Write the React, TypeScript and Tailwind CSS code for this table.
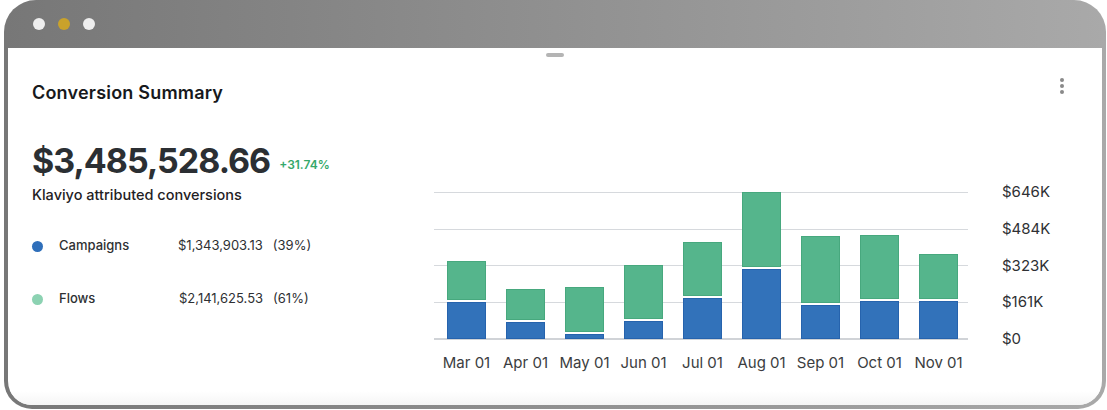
import React from "react"

const FONT = { fontFamily: "Inter, 'Noto Sans', sans-serif" }

interface Month {
  label: string
  campaigns: number
  flows: number
}

// values in $K, read off the chart
const months: Month[] = [
  { label: "Mar 01", campaigns: 162, flows: 183 },
  { label: "Apr 01", campaigns: 76, flows: 146 },
  { label: "May 01", campaigns: 21, flows: 207 },
  { label: "Jun 01", campaigns: 79, flows: 247 },
  { label: "Jul 01", campaigns: 180, flows: 247 },
  { label: "Aug 01", campaigns: 308, flows: 338 },
  { label: "Sep 01", campaigns: 150, flows: 304 },
  { label: "Oct 01", campaigns: 165, flows: 293 },
  { label: "Nov 01", campaigns: 165, flows: 210 },
]

const yTicks = ["$646K", "$484K", "$323K", "$161K", "$0"]

const CHART_H = 147
const MAX = 646

function Bar({ m }: { m: Month }) {
  const blue = (m.campaigns / MAX) * CHART_H
  const green = (m.flows / MAX) * CHART_H - 2
  return (
    <div className="w-[39px] flex flex-col justify-end">
      <div className="bg-[#55b58c] border border-[#47a87e]" style={{ height: green }} />
      <div className="h-[2px]" />
      <div className="bg-[#3272ba] border border-[#2663ad]" style={{ height: blue }} />
    </div>
  )
}

export default function App() {
  return (
    <div className="w-[1107px] h-[410px] bg-white" style={FONT}>
      <div className="ml-[4px] w-[1102px] h-[409px] rounded-t-[32px] rounded-b-[28px] bg-[linear-gradient(to_right,#777777,#a9a9a9)] px-[4px] pb-[4px] flex flex-col">
        {/* Window bar */}
        <div className="h-[48px] shrink-0 flex items-center gap-[13px] pl-[25px] pb-[1px]">
          <span className="w-[12px] h-[12px] rounded-full bg-[#eeeeee]" />
          <span className="w-[12px] h-[12px] rounded-full bg-[#c9a22b]" />
          <span className="w-[12px] h-[12px] rounded-full bg-[#eeeeee]" />
        </div>

        {/* Card */}
        <div className="flex-1 bg-white rounded-b-[24px] flex flex-col overflow-hidden">
          <div className="h-[16px] flex justify-center pt-[5px]">
            <div className="w-[18px] h-[4px] rounded-full bg-[#b4b4b4]" />
          </div>

          <div className="mt-[15px] h-[28px] flex justify-between pl-[24px] pr-[38px]">
            <h2 className="text-[18px] leading-[28px] font-semibold text-[#17191c] tracking-[0.2px]">
              Conversion Summary
            </h2>
            <div className="-mt-[1px] flex flex-col gap-[2px] items-center">
              <span className="w-[4px] h-[4px] rounded-full bg-[#8a8a8a]" />
              <span className="w-[4px] h-[4px] rounded-full bg-[#8a8a8a]" />
              <span className="w-[4px] h-[4px] rounded-full bg-[#8a8a8a]" />
            </div>
          </div>

          <div className="flex">
            {/* Summary */}
            <div className="w-[426px] pl-[24px]">
              <div className="mt-[34px] flex items-start">
                <span className="text-[34px] leading-[40px] font-bold text-[#2b2f33] tracking-[-1px]">
                  $3,485,528.66
                </span>
                <span className="ml-[9px] mt-[16px] text-[12px] leading-[16px] font-semibold text-[#34a86a]">
                  +31.74%
                </span>
              </div>
              <p className="mt-[4px] text-[14.5px] leading-[20px] font-medium text-[#1f2124]">
                Klaviyo attributed conversions
              </p>

              <div className="mt-[31px] h-[20px] flex items-center text-[13px] text-[#2e3033]">
                <span className="w-[11px] h-[11px] rounded-full bg-[#2f6fba]" />
                <span className="ml-[16px] w-[119px] font-medium">Campaigns</span>
                <span>$1,343,903.13</span>
                <span className="ml-[10px]">(39%)</span>
              </div>
              <div className="mt-[33px] h-[20px] flex items-center text-[13px] text-[#2e3033]">
                <span className="w-[11px] h-[11px] rounded-full bg-[#8cd2b2]" />
                <span className="ml-[16px] w-[120px] font-medium">Flows</span>
                <span>$2,141,625.53</span>
                <span className="ml-[10px]">(61%)</span>
              </div>
            </div>

            {/* Chart */}
            <div className="mt-[85px]">
              <div className="relative w-[534px] h-[148px]">
                <div className="absolute inset-0 flex flex-col justify-between">
                  <div className="h-px bg-[#d6d9dd]" />
                  <div className="h-px bg-[#d6d9dd]" />
                  <div className="h-px bg-[#d6d9dd]" />
                  <div className="h-px bg-[#d6d9dd]" />
                  <div className="h-[2px] bg-[#d0d3d7]" />
                </div>
                <div className="relative h-[147px] flex items-end gap-[20px] pl-[13px]">
                  {months.map((m) => (
                    <Bar key={m.label} m={m} />
                  ))}
                </div>
              </div>
              <div className="mt-[13px] flex gap-[20px] pl-[13px]">
                {months.map((m) => (
                  <div key={m.label} className="w-[39px] flex justify-center">
                    <span className="whitespace-nowrap text-[15px] leading-[20px] text-[#3b3d40]">{m.label}</span>
                  </div>
                ))}
              </div>
            </div>

            <div className="ml-[34px] mt-[75px] h-[167px] flex flex-col justify-between">
              {yTicks.map((t) => (
                <span key={t} className="text-[15px] leading-[20px] text-[#2f3134]">
                  {t}
                </span>
              ))}
            </div>
          </div>

          <div className="mt-auto h-[14px] bg-[linear-gradient(to_bottom,#ffffff,#f5f5f5)]" />
        </div>
      </div>
    </div>
  )
}
